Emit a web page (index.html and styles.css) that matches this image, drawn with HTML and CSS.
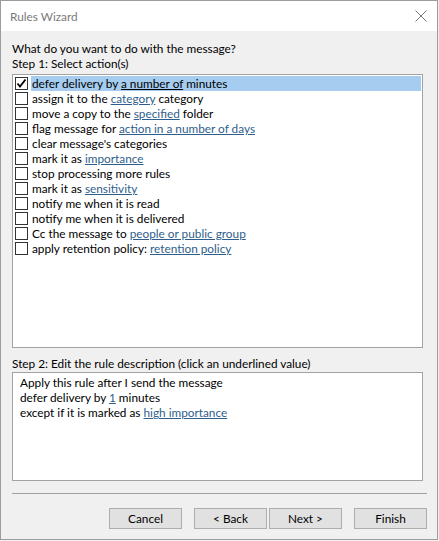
FILE: index.html
```html
<!DOCTYPE html>
<html>
<head>
<meta charset="utf-8">
<link rel="stylesheet" href="styles.css">
</head>
<body>
<div class="window">
  <div class="titlebar">
    <span class="title">Rules Wizard</span>
    <svg class="close" width="12" height="12" viewBox="0 0 12 12"><path d="M0.5 0.5 L11.5 11.5 M11.5 0.5 L0.5 11.5" stroke="#777" stroke-width="1" fill="none"/></svg>
  </div>
  <div class="content">
    <div class="label">What do you want to do with the message?</div>
    <div class="label">Step 1: Select action(s)</div>
    <div class="listbox">
      <div class="row selected"><span class="cb checked"><svg width="11" height="11" viewBox="0 0 11 11"><path d="M1.5 5.5 L4 8.5 L9.5 1.5" stroke="#000" stroke-width="1.8" fill="none"/></svg></span><span class="txt">defer delivery by <u>a number of</u> minutes</span></div>
      <div class="row"><span class="cb"></span><span class="txt">assign it to the <a>category</a> category</span></div>
      <div class="row"><span class="cb"></span><span class="txt">move a copy to the <a>specified</a> folder</span></div>
      <div class="row"><span class="cb"></span><span class="txt">flag message for <a>action in a number of days</a></span></div>
      <div class="row"><span class="cb"></span><span class="txt">clear message's categories</span></div>
      <div class="row"><span class="cb"></span><span class="txt">mark it as <a>importance</a></span></div>
      <div class="row"><span class="cb"></span><span class="txt">stop processing more rules</span></div>
      <div class="row"><span class="cb"></span><span class="txt">mark it as <a>sensitivity</a></span></div>
      <div class="row"><span class="cb"></span><span class="txt">notify me when it is read</span></div>
      <div class="row"><span class="cb"></span><span class="txt">notify me when it is delivered</span></div>
      <div class="row"><span class="cb"></span><span class="txt">Cc the message to <a>people or public group</a></span></div>
      <div class="row"><span class="cb"></span><span class="txt">apply retention policy: <a>retention policy</a></span></div>
    </div>
    <div class="label step2">Step 2: Edit the rule description (click an underlined value)</div>
    <div class="desc">
      <div class="line">Apply this rule after I send the message</div>
      <div class="line">defer delivery by <a>1</a> minutes</div>
      <div class="line">except if it is marked as <a>high importance</a></div>
    </div>
    <div class="sep"></div>
    <div class="buttons">
      <button class="btn">Cancel</button>
      <button class="btn back">&lt; Back</button>
      <button class="btn next">Next &gt;</button>
      <button class="btn finish">Finish</button>
    </div>
  </div>
</div>
</body>
</html>
```
FILE: styles.css
```css
html, body {
  margin: 0;
  padding: 0;
  background: #f0f0f0;
}
body {
  font-family: "Lato", "Open Sans", sans-serif;
  font-size: 11.8px;
  color: #000;
}
.window {
  width: 438px;
  height: 540px;
  box-sizing: border-box;
  border: 1px solid #9c9c9c;
  background: #f0f0f0;
  display: flex;
  flex-direction: column;
}
.titlebar {
  height: 30px;
  background: #fff;
  display: flex;
  align-items: center;
  justify-content: space-between;
  padding: 0 9px 0 9px;
  flex: none;
}
.title {
  color: #7a7a7a;
  font-size: 11.8px;
}
.close {
  margin-right: 1px;
}
.content {
  padding: 10px 0 0 11px;
  display: flex;
  flex-direction: column;
}
.label {
  height: 15px;
  line-height: 15px;
}
.listbox {
  margin-top: 3px;
  width: 411px;
  height: 274px;
  box-sizing: border-box;
  border: 1px solid #a3a3a3;
  background: #fff;
  padding-top: 1px;
}
.row {
  height: 15px;
  display: flex;
  align-items: center;
}
.cb {
  width: 13px;
  height: 13px;
  box-sizing: border-box;
  border: 1px solid #333;
  background: #fff;
  margin-left: 2px;
  margin-right: 3px;
  display: flex;
  align-items: center;
  justify-content: center;
  flex: none;
}
.txt {
  line-height: 15px;
  height: 15px;
  padding-left: 1px;
  flex: 1;
  white-space: nowrap;
}
.selected .txt {
  background: #a6cdf0;
  margin-right: 1px;
}
a {
  color: #2f5e8c;
  text-decoration: underline;
}
.step2 {
  margin-top: 8px;
}
.desc {
  margin-top: 1px;
  width: 411px;
  height: 109px;
  box-sizing: border-box;
  border: 1px solid #a3a3a3;
  background: #fff;
  padding: 2px 0 0 7px;
}
.line {
  height: 15px;
  line-height: 15px;
}
.sep {
  margin-top: 12px;
  width: 415px;
  height: 1px;
  background: #a0a0a0;
}
.buttons {
  margin-top: 14px;
  width: 415px;
  display: flex;
  justify-content: flex-end;
}
.btn {
  width: 73px;
  height: 21px;
  box-sizing: border-box;
  border: 1px solid #adadad;
  background: #e1e1e1;
  font-family: inherit;
  font-size: 11.8px;
  color: #000;
  padding: 0;
  margin: 0;
}
.back {
  margin-left: 12px;
}
.next {
  margin-left: 2px;
}
.finish {
  margin-left: 12px;
}
```
